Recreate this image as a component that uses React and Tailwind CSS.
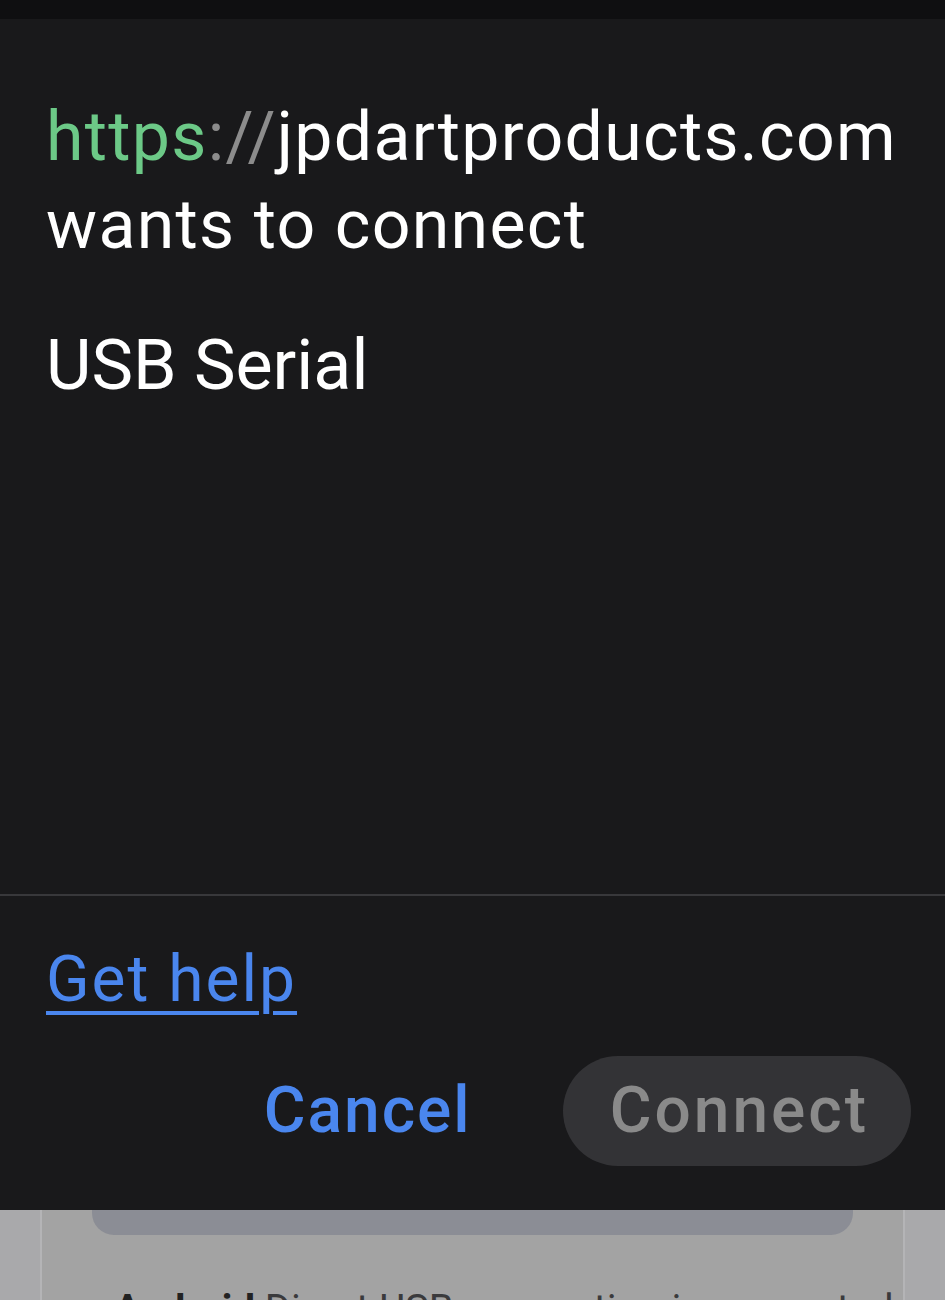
import React from 'react';

function ConnectDialog() {
  return (
    <div className="flex flex-col bg-[#19191b] h-[1191px]">
      {/* header text */}
      <div className="px-[46px] pt-[74px] flex-1">
        <h1 className="text-[68px] leading-[88px] text-white tracking-[1.3px] break-all">
          <span className="text-[#6cc987]">https</span>
          <span className="text-[#8c8c8c]">://</span>
          <span>jpdartproducts.com</span>
          <br />
          wants to connect
        </h1>
        <p className="mt-[52px] text-[70px] leading-[88px] text-white">USB Serial</p>
      </div>

      <div className="h-[2px] bg-[#38383b]" />

      {/* footer */}
      <div className="px-[46px] pt-[44px] pb-[44px]">
        <a href="#" className="text-[64px] leading-[80px] tracking-[2px] text-[#4a86ee] underline decoration-[4px] underline-offset-[10px]">
          Get help
        </a>
        <div className="flex items-center justify-end gap-[91px] mt-[36px] -mr-[12px]">
          <button className="text-[64px] leading-[80px] font-medium tracking-[2px] text-[#4a86ee]">Cancel</button>
          <button className="h-[110px] pl-[47px] pr-[42px] rounded-full bg-[#333336] text-[64px] leading-[80px] font-medium tracking-[3px] text-[#8a8a8a]">
            Connect
          </button>
        </div>
      </div>
    </div>
  );
}

function Backdrop() {
  return (
    <div className="h-[90px] overflow-hidden bg-[#a9a9ab] px-[40px]">
      <div className="h-full bg-[#a3a3a3] border-x-2 border-[#b4b4b6] px-[50px]">
        <div className="h-[25px] rounded-b-[22px] bg-[#8b8d95]" />
        <p className="mt-[50px] text-[40px] leading-[50px] text-[#3a3a3c] px-[22px] whitespace-nowrap">
          <span className="font-bold text-[#222]">Android</span> Direct USB connection is supported
        </p>
      </div>
    </div>
  );
}

export default function App() {
  return (
    <div className="w-[945px] h-[1300px] overflow-hidden bg-[#0f0f11] font-['Roboto','Liberation_Sans',sans-serif]">
      <div className="h-[19px] bg-[#0f0f11]" />
      <ConnectDialog />
      <Backdrop />
    </div>
  );
}
